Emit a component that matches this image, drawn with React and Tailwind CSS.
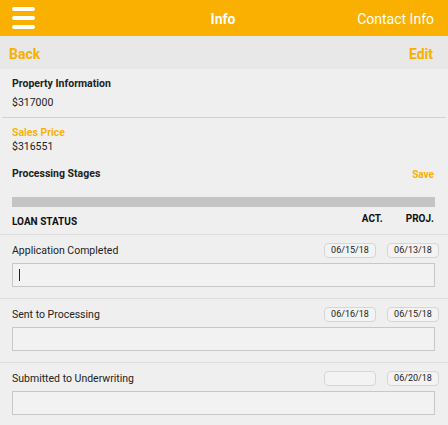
import React from 'react';

const stages = [
  { label: 'Application Completed', act: '06/15/18', proj: '06/13/18', focused: true },
  { label: 'Sent to Processing', act: '06/16/18', proj: '06/15/18' },
  { label: 'Submitted to Underwriting', act: '', proj: '06/20/18' },
];

function DateBox({ value }) {
  return (
    <div className="w-[52px] h-[15px] rounded-[4px] border border-[#d6d6d6] bg-[#f3f3f3] flex items-center justify-center text-[9px] leading-none text-[#222]">
      {value}
    </div>
  );
}

function StageRow({ stage }) {
  return (
    <div className="border-t border-[#dedede] pt-2 pb-[11px] pl-3 pr-[9px]">
      <div className="flex items-center h-[15px]">
        <span className="flex-1 text-[10.5px] text-[#222]">{stage.label}</span>
        <div className="flex gap-[11px]">
          <DateBox value={stage.act} />
          <DateBox value={stage.proj} />
        </div>
      </div>
      <div className="mt-[5px] mr-[4px] h-[24px] border border-[#c8c8c8] bg-[#f2f2f2] flex items-center pl-[6px]">
        {stage.focused && <span className="w-px h-[12px] bg-[#222]" />}
      </div>
    </div>
  );
}

export default function App() {
  return (
    <div className="w-[448px] h-[425px] overflow-hidden bg-[#efefef] font-['Roboto',sans-serif]">
      {/* Top bar */}
      <div className="h-9 bg-[#F9B000] grid grid-cols-[1fr_auto_1fr] items-center pl-3 pr-[14px] text-white">
        <div className="flex flex-col gap-[5px] w-[23px]">
          <span className="h-1 rounded-full bg-white" />
          <span className="h-1 rounded-full bg-white" />
          <span className="h-1 rounded-full bg-white" />
        </div>
        <span className="text-[14px] font-bold pt-[2px]">Info</span>
        <span className="text-[14px] text-right pt-[2px]">Contact Info</span>
      </div>

      {/* Sub bar */}
      <div className="h-[33px] bg-[#e8e8e8] flex items-center justify-between pt-[3px] pl-[9px] pr-[15px] text-[14px] font-bold text-[#F9B000]">
        <span>Back</span>
        <span>Edit</span>
      </div>

      {/* Property info */}
      <div className="px-3 pt-2 pb-[7px] text-[10.5px] leading-[14px] text-[#222]">
        <div className="font-bold">Property Information</div>
        <div className="mt-[5px]">$317000</div>
      </div>
      <div className="mx-[2px] h-px bg-[#d2d2d2]" />

      <div className="px-3 pt-2 text-[10.5px] leading-[14px] text-[#222]">
        <div className="text-[#F9B000] font-semibold">Sales Price</div>
        <div>$316551</div>
        <div className="mt-[13px] flex items-end justify-between pr-[2px]">
          <span className="font-bold">Processing Stages</span>
          <span className="text-[10px] font-bold text-[#F9B000] leading-[12px]">Save</span>
        </div>
      </div>

      <div className="mt-4 ml-3 mr-[13px] h-[10px] bg-[#c4c4c4]" />

      {/* Loan status header */}
      <div className="h-[27px] flex items-center pl-3 pr-[14px] text-[10px] font-bold text-[#111]">
        <span className="flex-1 pt-[1px]">LOAN STATUS</span>
        <span className="mb-[4px]">ACT.</span>
        <span className="ml-[23px] mb-[4px]">PROJ.</span>
      </div>

      {stages.map((s) => (
        <StageRow key={s.label} stage={s} />
      ))}
    </div>
  );
}
